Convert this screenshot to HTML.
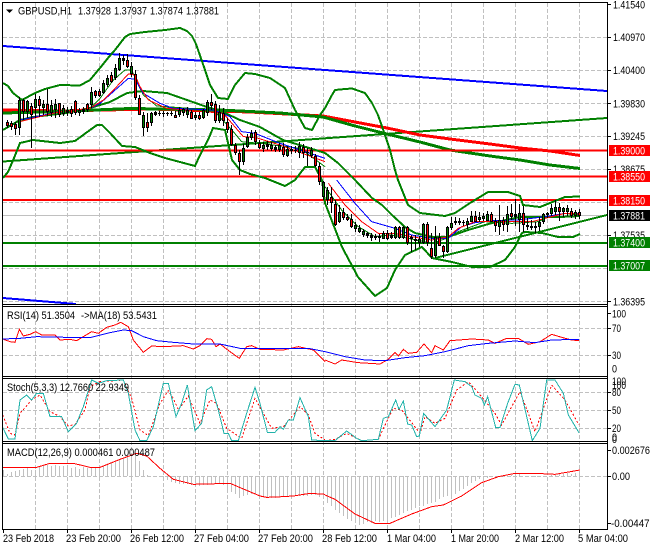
<!DOCTYPE html>
<html><head><meta charset="utf-8"><title>GBPUSD,H1</title>
<style>
html,body{margin:0;padding:0;background:#fff;width:650px;height:550px;overflow:hidden}
svg{display:block;font-family:"Liberation Sans",sans-serif;font-size:11px}
polyline,path,line{vector-effect:non-scaling-stroke;fill:none}
.c{shape-rendering:crispEdges}
text{fill:#000}
.w{fill:#fff}
</style></head><body>
<svg width="650" height="550" viewBox="0 0 650 550" xmlns="http://www.w3.org/2000/svg">
<defs>
<clipPath id="cm"><rect x="3" y="3" width="604" height="301"/></clipPath>
<clipPath id="cr"><rect x="3" y="307" width="604" height="69"/></clipPath>
<clipPath id="cs"><rect x="3" y="379" width="604" height="62"/></clipPath>
<clipPath id="cd"><rect x="3" y="444" width="604" height="85"/></clipPath>
</defs>
<g class="c" shape-rendering="crispEdges">
<!-- grid -->
<path stroke="#c0c0c0" stroke-dasharray="4 2" d="M35.5 3V529M67.5 3V529M99.5 3V529M131.5 3V529M163.5 3V529M195.5 3V529M227.5 3V529M259.5 3V529M291.5 3V529M323.5 3V529M355.5 3V529M387.5 3V529M419.5 3V529M451.5 3V529M483.5 3V529M515.5 3V529M547.5 3V529M579.5 3V529M3 37.5H607M3 70.5H607M3 103.5H607M3 136.5H607M3 169.5H607M3 202.5H607M3 235.5H607M3 268.5H607M3 301.5H607M3 328.5H607M3 355.5H607M3 392.5H607M3 410.5H607M3 428.5H607M3 476.5H607"/>
<line x1="3" x2="607" y1="215.5" y2="215.5" stroke="#c0c0c0"/>

<!-- main indicators -->
<g clip-path="url(#cm)">
<polyline fill="none" stroke="#0000ff" stroke-width="2" points="3,46 325,70 607,91"/>
<polyline fill="none" stroke="#0000ff" stroke-width="2" points="3,298 76,304"/>
<polyline fill="none" stroke="#008000" stroke-width="2" points="3,161.5 607,118"/>
<polyline fill="none" stroke="#008000" stroke-width="2" points="435,258 607,215"/>
<polyline fill="none" stroke="#ff0000" stroke-width="3" points="3,110 60,111 150,109 250,112 323,116 355,122 387,128 420,135 450,139 490,144 520,148 550,151 580,155.5"/>
<polyline fill="none" stroke="#008000" stroke-width="3" points="3,113 60,111.5 130,108.5 220,110 280,113 323,117 355,126 387,134 420,142 450,150 490,156 520,160 550,165 580,168.5"/>
<path stroke="#ff0000" stroke-width="2" d="M3 150.5H607M3 176.5H607M3 200H607"/>
<path stroke="#008000" stroke-width="2" d="M3 243H607M3 266H607"/>
<!-- Bollinger -->
<polyline fill="none" stroke="#008000" stroke-width="2" points="3,83 8,86 13,93 22,100 35,93 45,89 60,85 80,85.5 90,80 100,68 108,58 115,50 125,37 130,34 145,32 165,30 180,28 187,31 192,36 196,44 205,70 210,85 218,98 228,99 235,85 245,73 255,74 270,78 285,88 295,110 305,128 312,130 320,115 325,108 332,95 335,90 345,89 352,88.5 365,93 372,103 378,115 385,135 390,150 395,170 398,180 408,205 420,213 445,216 455,213 470,203 488,192 508,192 520,196 523,205 540,207 550,203 565,197 580,196.5"/>
<polyline fill="none" stroke="#008000" stroke-width="2" points="3,178 8,172 14,158 20,143 33,140 60,143 75,141 90,130 97,125 102,125 110,133 122,146 135,147 150,153 165,158 180,162 195,166 200,155 208,140 213,128 225,130 232,160 240,170 250,174 265,178 285,186 295,180 305,167 315,167 322,180 325,203 342,247 358,277 375,296 387,288 395,270 405,255 422,247 432,258 452,262 472,267 490,267 505,260 515,247 522,233 525,232 542,233 558,237 573,237 580,234"/>
<polyline fill="none" stroke="#008000" stroke-width="2" points="3,130 20,120 33,117 67,113 90,108 110,102 127,93 143,91 167,93 187,100 207,107 223,112 240,120 260,127 283,140 293,143 325,153 338,163 355,180 372,198 382,205 392,215 405,227 415,233 432,237 448,237 468,230 492,223 520,217 560,217 580,216"/>
<!-- MAs -->
<g transform="scale(.33333)">
<polyline stroke="#008000" points="270,325 300,295 340,240 375,210 395,210 410,245 430,285 470,318 640,330 700,395 725,425 780,430 900,445 975,500"/>
<polyline stroke="#0000ff" points="60,360 180,335 270,325 300,310 340,275 385,235 405,238 430,280 480,310 520,325 640,330 690,350 725,395 765,400 840,430 975,475"/>
<polyline stroke="#ff0000" points="60,365 180,335 270,325 310,300 350,260 385,222 405,225 420,260 445,300 500,325 670,340 700,375 730,410 765,412 840,435 975,485"/>
</g>
<g transform="translate(325,180) scale(.33333)">
<polyline stroke="#008000" points="0,20 50,90 100,140 150,170 200,165 250,175 320,190 365,175 400,155 480,125 560,130 640,125 670,110 720,100 765,105"/>
<polyline stroke="#0000ff" points="35,0 90,70 140,125 210,145 260,165 320,175 370,175 410,140 450,128 500,122 580,120 660,110 720,100 765,100"/>
<polyline stroke="#ff0000" points="10,10 60,75 110,125 160,160 210,160 260,170 320,180 370,170 400,145 450,125 500,125 560,125 620,125 660,115 720,100 765,102"/>
</g>
<!-- candle wicks -->
<path stroke="#000" d="M7.5 120V128M11.5 121V130M15.5 122V135M19.5 97V135M23.5 99V120M27.5 100V118M31.5 103V148M35.5 94V118M39.5 96V117M43.5 100V115M47.5 89V116M51.5 100V117M55.5 99V118M59.5 103V117M63.5 105V116M67.5 107V116M71.5 106V117M75.5 100V115M79.5 108V116M83.5 107V114M87.5 103V112M91.5 87V108M95.5 90V98M99.5 89V97M103.5 80V94M107.5 75V87M111.5 72V83M115.5 64V80M119.5 53V71M123.5 55V65M127.5 54V68M131.5 62V77M135.5 70V100M139.5 95V115M143.5 112V136M147.5 113V132M151.5 112V126M155.5 111V116M159.5 111V116M163.5 111V117M167.5 112V116M171.5 111V116M175.5 111V118M179.5 107V117M183.5 108V116M187.5 107V118M191.5 110V119M195.5 112V120M199.5 112V120M203.5 109V119M207.5 100V116M211.5 94V110M215.5 101V123M219.5 105V123M223.5 108V126M227.5 118V133M231.5 125V146M235.5 143V155M239.5 150V175M243.5 144V165M247.5 134V148M251.5 130V140M255.5 130V145M259.5 140V149M263.5 142V152M267.5 141V150M271.5 142V151M275.5 145V152M279.5 143V152M283.5 143V157M287.5 146V157M291.5 146V154M295.5 146V153M299.5 142V158M303.5 144V158M307.5 148V166M311.5 147V158M315.5 154V167M319.5 163V185M323.5 181V200M327.5 187V205M331.5 187V213M335.5 200V226M339.5 205V223M343.5 208V220M347.5 214V221M351.5 214V228M355.5 222V232M359.5 225V233M363.5 229V237M367.5 232V238M371.5 233V241M375.5 234V240M379.5 234V242M383.5 231V239M387.5 230V240M391.5 232V239M395.5 226V239M399.5 226V239M403.5 226V239M407.5 226V245M411.5 235V252M415.5 235V250M419.5 236V247M423.5 223V244M427.5 222V246M431.5 233V259M435.5 226V258M439.5 233V246M443.5 245V258M447.5 226V253M451.5 217V230M455.5 217V225M459.5 218V225M463.5 220V226M467.5 218V229M471.5 211V222M475.5 211V222M479.5 212V222M483.5 213V221M487.5 211V221M491.5 212V222M495.5 218V232M499.5 205V235M503.5 217V231M507.5 206V232M511.5 204V220M515.5 199V226M519.5 204V232M523.5 206V232M527.5 218V230M531.5 220V230M535.5 222V233M539.5 217V231M543.5 213V224M547.5 212V218M551.5 204V216M555.5 200V215M559.5 203V221M563.5 207V217M567.5 205V216M571.5 208V218M575.5 210V219M579.5 209V219"/>
<!-- candle bodies -->
<path stroke="#000" stroke-width="3" d="M7.5 122V126M11.5 123V127M15.5 124V129M19.5 100V128M23.5 100V112M27.5 101V112M31.5 106V115M35.5 99V108M39.5 99V106M43.5 104V108M47.5 104V112M51.5 105V113M55.5 104V110M59.5 103V115M63.5 108V114M67.5 110V113M71.5 109V114M75.5 101V113M79.5 110V113M83.5 109V112M87.5 104V110M91.5 92V105M95.5 91V96M99.5 91V96M103.5 83V93M107.5 78V85M111.5 75V82M115.5 68V78M119.5 58V70M123.5 58V61M127.5 60V67M131.5 66V74M135.5 74V98M139.5 98V115M143.5 115V128M147.5 122V128M151.5 113V123M155.5 112V115M159.5 113V114M163.5 113V114M167.5 113V114M171.5 113V114M175.5 115V118M179.5 110V115M183.5 109V113M187.5 110V115M191.5 112V119M195.5 115V118M199.5 115V119M203.5 110V118M207.5 102V113M211.5 102V106M215.5 104V121M219.5 112V121M223.5 113V121M227.5 122V130M231.5 129V145M235.5 145V153M239.5 153V162M243.5 148V162M247.5 137V147M251.5 133V138M255.5 132V142M259.5 143V148M263.5 145V149M267.5 144V147M271.5 145V149M275.5 147V150M279.5 145V150M283.5 147V155M287.5 149V156M291.5 149V151M295.5 150V151M299.5 146V153M303.5 147V153M307.5 152V153M311.5 150V156M315.5 156V166M319.5 166V182M323.5 182V197M327.5 190V200M331.5 197V203M335.5 204V225M339.5 212V222M343.5 212V218M347.5 217V220M351.5 219V227M355.5 225V229M359.5 228V232M363.5 231V235M367.5 233V236M371.5 235V238M375.5 236V238M379.5 236V238M383.5 233V239M387.5 233V239M391.5 235V238M395.5 227V238M399.5 227V238M403.5 227V238M407.5 227V243M411.5 237V239M415.5 239V241M419.5 239V243M423.5 224V243M427.5 224V243M431.5 248V257M435.5 237V256M439.5 237V246M443.5 246V252M447.5 227V252M451.5 223V228M455.5 221V223M459.5 221V223M463.5 222V223M467.5 221V225M471.5 216V222M475.5 216V222M479.5 217V220M483.5 216V219M487.5 214V221M491.5 214V222M495.5 221V226M499.5 220V227M503.5 220V225M507.5 214V225M511.5 213V217M515.5 214V217M519.5 213V220M523.5 213V225M527.5 225V227M531.5 226V228M535.5 226V228M539.5 222V227M543.5 214V222M547.5 213V215M551.5 208V214M555.5 207V212M559.5 207V212M563.5 208V212M567.5 208V212M571.5 211V216M575.5 212V216M579.5 212V216"/>
<path stroke="#ff0000" d="M7.5 123V125M11.5 124V126M15.5 125V128M23.5 101V111M31.5 107V114M39.5 100V105M47.5 105V111M59.5 104V114M71.5 110V113M75.5 102V112M87.5 105V109M95.5 92V95M99.5 92V95M111.5 76V81M127.5 61V66M135.5 75V97M139.5 99V114M147.5 123V127M175.5 116V117M191.5 113V118M199.5 116V118M211.5 103V105M215.5 105V120M223.5 114V120M227.5 123V129M231.5 130V144M235.5 146V152M239.5 154V161M255.5 133V141M259.5 144V147M283.5 148V154M303.5 148V152M315.5 157V165M319.5 167V181M331.5 198V202M335.5 205V224M343.5 213V217M347.5 218V219M351.5 220V226M387.5 234V238M399.5 228V237M407.5 228V242M427.5 225V242M431.5 249V256M439.5 238V245M443.5 247V251M475.5 217V221M491.5 215V221M495.5 222V225M503.5 221V224M511.5 214V216M523.5 214V224M559.5 208V211M571.5 212V215M579.5 213V215"/>
<path stroke="#008000" d="M19.5 101V127M27.5 102V111M35.5 100V107M43.5 105V107M51.5 106V112M55.5 105V109M63.5 109V113M79.5 111V112M91.5 93V104M103.5 84V92M107.5 79V84M115.5 69V77M119.5 59V69M131.5 67V73M143.5 116V127M151.5 114V122M179.5 111V114M183.5 110V112M187.5 111V114M195.5 116V117M203.5 111V117M207.5 103V112M219.5 113V120M243.5 149V161M247.5 138V146M251.5 134V137M263.5 146V148M271.5 146V148M279.5 146V149M287.5 150V155M299.5 147V152M311.5 151V155M323.5 183V196M327.5 191V199M339.5 213V221M355.5 226V228M359.5 229V231M363.5 232V234M383.5 234V238M395.5 228V237M403.5 228V237M419.5 240V242M423.5 225V242M435.5 238V255M447.5 228V251M451.5 224V227M467.5 222V224M471.5 217V221M479.5 218V219M483.5 217V218M487.5 215V220M499.5 221V226M507.5 215V224M519.5 214V219M539.5 223V226M543.5 215V221M551.5 209V213M555.5 208V211M563.5 209V211M567.5 209V211M575.5 213V215"/>
</g>

<!-- RSI -->
<g clip-path="url(#cr)">
<g transform="translate(0,180) scale(.33333)">
<polyline stroke="#ff0000" points="8,477 30,485 45,487 58,448 70,468 90,463 107,455 125,465 165,465 180,480 210,478 230,482 250,470 275,455 295,460 320,442 345,435 362,427 385,440 400,480 430,517 455,498 490,500 550,497 580,507 600,497 620,476 635,478 648,500 660,492 690,515 718,535 740,500 755,497 780,508 850,510 895,500 940,510 975,545"/>
<polyline stroke="#0000ff" points="8,477 60,475 110,470 200,472 270,473 330,458 370,450 395,452 430,470 470,482 520,487 580,492 660,492 720,505 850,506 930,506 975,515"/>
</g>
<g transform="translate(325,180) scale(.33333)">
<polyline stroke="#ff0000" points="0,540 30,552 50,540 100,548 165,552 190,538 210,518 220,528 235,508 250,520 275,517 297,492 320,518 330,497 355,510 375,482 440,477 490,480 510,490 545,475 580,475 610,493 645,485 680,463 710,472 740,480 762,482"/>
<polyline stroke="#0000ff" points="0,515 60,530 120,540 180,542 240,533 300,527 360,515 430,497 490,490 570,483 630,488 680,480 762,478"/>
</g>
</g>

<!-- Stoch -->
<g clip-path="url(#cs)">
<g transform="translate(0,370) scale(.33333)">
<polyline stroke="#ff0000" stroke-dasharray="2 2" points="8,135 30,190 45,195 60,130 95,90 120,75 150,125 180,140 205,168 225,163 255,120 270,50 300,35 370,30 395,85 420,180 445,197 480,100 505,62 520,85 535,120 565,78 600,160 630,90 650,100 680,175 725,205 765,85 790,130 815,175 850,170 900,110 925,135 945,190 975,210"/>
<polyline stroke="#20b2aa" points="8,172 25,207 45,207 60,90 80,75 95,90 110,70 130,70 150,140 185,140 205,185 230,160 250,110 275,30 295,40 320,32 370,30 385,70 405,180 420,212 440,212 460,170 490,40 505,40 528,140 545,100 562,45 585,182 605,160 620,60 635,50 655,120 672,190 685,190 695,212 715,212 740,130 765,52 780,100 802,187 825,187 840,170 850,178 865,150 880,150 900,83 925,140 935,210 975,212"/>
</g>
<g transform="translate(325,370) scale(.33333)">
<polyline stroke="#ff0000" stroke-dasharray="2 2" points="0,212 30,208 65,190 110,212 160,208 185,155 205,115 230,120 250,145 285,190 300,140 330,160 360,145 395,60 430,35 470,80 510,130 530,165 560,110 585,65 610,130 630,185 650,130 680,45 720,90 762,165"/>
<polyline stroke="#20b2aa" points="0,212 30,212 65,183 95,205 110,212 160,208 175,145 190,140 212,90 222,118 235,93 248,162 260,165 275,200 283,198 296,130 330,170 365,120 388,30 420,35 440,50 450,75 470,85 478,105 488,80 512,172 525,172 548,100 570,43 583,45 622,212 645,175 665,30 690,30 715,70 730,135 762,188"/>
</g>
</g>

<!-- MACD -->
<g clip-path="url(#cd)">
<path stroke="#c0c0c0" d="M3.5 476V470M7.5 476V474M11.5 476V472M15.5 476V471M19.5 476V470M23.5 476V469M27.5 476V468M31.5 476V470M35.5 476V470M39.5 476V466M43.5 476V465M47.5 476V465M51.5 476V466M55.5 476V465M59.5 476V466M63.5 476V466M67.5 476V467M71.5 476V468M75.5 476V467M79.5 476V469M83.5 476V467M87.5 476V468M91.5 476V467M95.5 476V468M99.5 476V467M103.5 476V466M107.5 476V465M111.5 476V463M115.5 476V462M119.5 476V460M123.5 476V458M127.5 476V456M131.5 476V455M135.5 476V456M139.5 476V461M143.5 476V470M147.5 476V475M159.5 476V477M163.5 476V478M167.5 476V480M171.5 476V482M175.5 476V483M179.5 476V484M183.5 476V484M187.5 476V484M191.5 476V485M195.5 476V485M199.5 476V486M203.5 476V485M207.5 476V485M211.5 476V484M215.5 476V484M219.5 476V484M223.5 476V485M227.5 476V489M231.5 476V492M235.5 476V494M239.5 476V498M243.5 476V496M247.5 476V495M251.5 476V494M255.5 476V494M259.5 476V496M263.5 476V497M267.5 476V497M271.5 476V498M275.5 476V498M279.5 476V497M283.5 476V497M287.5 476V497M291.5 476V496M295.5 476V496M299.5 476V496M303.5 476V496M307.5 476V496M311.5 476V495M315.5 476V495M319.5 476V497M323.5 476V495M327.5 476V503M331.5 476V506M335.5 476V510M339.5 476V513M343.5 476V516M347.5 476V519M351.5 476V521M355.5 476V523M359.5 476V525M363.5 476V524M367.5 476V522M371.5 476V523M375.5 476V521M379.5 476V522M383.5 476V521M387.5 476V519M391.5 476V518M395.5 476V517M399.5 476V515M403.5 476V513M407.5 476V511M411.5 476V510M415.5 476V508M419.5 476V506M423.5 476V506M427.5 476V504M431.5 476V503M435.5 476V502M439.5 476V499M443.5 476V497M447.5 476V496M451.5 476V496M455.5 476V494M459.5 476V491M463.5 476V489M467.5 476V486M471.5 476V483M475.5 476V481M479.5 476V479M483.5 476V478M487.5 476V478M491.5 476V477M511.5 476V475M515.5 476V473M519.5 476V474M523.5 476V476M527.5 476V477M531.5 476V477M535.5 476V477M539.5 476V477M543.5 476V477M551.5 476V475M555.5 476V475M559.5 476V474M563.5 476V474M567.5 476V473M571.5 476V474M575.5 476V473M579.5 476V473"/>
<g transform="translate(0,370) scale(.33333)">
<polyline stroke="#ff0000" points="8,292 110,292 150,280 220,280 270,292 300,292 360,268 410,250 440,258 480,295 520,328 580,343 690,340 780,378 800,382 830,381 880,378 930,370 975,373"/>
</g>
<g transform="translate(325,370) scale(.33333)">
<polyline stroke="#ff0000" points="0,375 30,388 90,432 150,460 195,460 260,432 320,410 355,405 410,378 470,338 520,320 570,310 650,311 690,313 765,300"/>
</g>
</g>

<!-- frames -->
<path stroke="#000" d="M2.5 2V530M2 2.5H608M607.5 2V530M2 304.5H608M2 306.5H608M2 376.5H608M2 378.5H608M2 441.5H608M2 443.5H608M2 529.5H608"/>
<!-- axis ticks -->
<path stroke="#000" d="M607 4.5H611M607 37.5H611M607 70.5H611M607 103.5H611M607 136.5H611M607 169.5H611M607 235.5H611M607 301.5H611M607 313.5H611M607 328.5H611M607 355.5H611M607 392.5H611M607 410.5H611M607 428.5H611M607 450.5H611M607 476.5H611M607 523.5H611M3.5 529V533M67.5 529V533M131.5 529V533M195.5 529V533M259.5 529V533M323.5 529V533M387.5 529V533M451.5 529V533M515.5 529V533M579.5 529V533"/>
</g>

<!-- title triangle -->
<polygon points="6,9.5 13,9.5 9.5,13" fill="#000"/>

<!-- pane texts -->
<text x="18" y="14.5" textLength="54" lengthAdjust="spacingAndGlyphs">GBPUSD,H1</text>
<text x="78" y="14.5" textLength="33" lengthAdjust="spacingAndGlyphs">1.37928</text>
<text x="114" y="14.5" textLength="33" lengthAdjust="spacingAndGlyphs">1.37937</text>
<text x="150" y="14.5" textLength="33" lengthAdjust="spacingAndGlyphs">1.37874</text>
<text x="186" y="14.5" textLength="33" lengthAdjust="spacingAndGlyphs">1.37881</text>
<text x="7" y="319" textLength="68" lengthAdjust="spacingAndGlyphs">RSI(14) 51.3504</text>
<text x="81" y="319" textLength="76" lengthAdjust="spacingAndGlyphs">-&gt;MA(18) 53.5431</text>
<text x="7" y="391" textLength="122" lengthAdjust="spacingAndGlyphs">Stoch(5,3,3) 12.7660 22.9349</text>
<text x="7" y="456" textLength="148" lengthAdjust="spacingAndGlyphs">MACD(12,26,9) 0.000461 0.000487</text>

<!-- right axis -->
<g>
<text x="613" y="8.5" textLength="32" lengthAdjust="spacingAndGlyphs">1.41540</text>
<text x="613" y="41" textLength="32" lengthAdjust="spacingAndGlyphs">1.40970</text>
<text x="613" y="74" textLength="32" lengthAdjust="spacingAndGlyphs">1.40400</text>
<text x="613" y="107.5" textLength="32" lengthAdjust="spacingAndGlyphs">1.39830</text>
<text x="613" y="140" textLength="32" lengthAdjust="spacingAndGlyphs">1.39245</text>
<text x="613" y="173" textLength="32" lengthAdjust="spacingAndGlyphs">1.38675</text>
<text x="613" y="239" textLength="32" lengthAdjust="spacingAndGlyphs">1.37535</text>
<text x="613" y="305.5" textLength="32" lengthAdjust="spacingAndGlyphs">1.36395</text>

<rect x="609" y="145" width="41" height="11" fill="#ff0000"/>
<text class="w" x="613" y="154.5" textLength="32" lengthAdjust="spacingAndGlyphs">1.39000</text>
<rect x="609" y="171" width="41" height="11" fill="#ff0000"/>
<text class="w" x="613" y="180.5" textLength="32" lengthAdjust="spacingAndGlyphs">1.38550</text>
<rect x="609" y="195" width="41" height="11" fill="#ff0000"/>
<text class="w" x="613" y="204.5" textLength="32" lengthAdjust="spacingAndGlyphs">1.38150</text>
<rect x="609" y="210" width="41" height="11" fill="#000"/>
<text class="w" x="613" y="219.5" textLength="32" lengthAdjust="spacingAndGlyphs">1.37881</text>
<rect x="609" y="237" width="41" height="11" fill="#008000"/>
<text class="w" x="613" y="246.5" textLength="32" lengthAdjust="spacingAndGlyphs">1.37400</text>
<rect x="609" y="260" width="41" height="11" fill="#008000"/>
<text class="w" x="613" y="269.5" textLength="32" lengthAdjust="spacingAndGlyphs">1.37007</text>

<text x="612" y="317.5" textLength="14" lengthAdjust="spacingAndGlyphs">100</text>
<text x="612" y="332" textLength="9" lengthAdjust="spacingAndGlyphs">70</text>
<text x="612" y="359" textLength="9" lengthAdjust="spacingAndGlyphs">30</text>
<text x="612" y="372.5" textLength="5" lengthAdjust="spacingAndGlyphs">0</text>
<text x="612" y="385" textLength="14" lengthAdjust="spacingAndGlyphs">100</text>
<text x="612" y="389" textLength="14" lengthAdjust="spacingAndGlyphs">100</text>
<text x="612" y="396" textLength="9" lengthAdjust="spacingAndGlyphs">80</text>
<text x="612" y="414" textLength="9" lengthAdjust="spacingAndGlyphs">50</text>
<text x="612" y="432" textLength="9" lengthAdjust="spacingAndGlyphs">20</text>
<text x="612" y="441" textLength="5" lengthAdjust="spacingAndGlyphs">0</text>
<text x="612" y="443" textLength="5" lengthAdjust="spacingAndGlyphs">0</text>
<text x="612" y="454" textLength="38" lengthAdjust="spacingAndGlyphs">0.002676</text>
<text x="612" y="480" textLength="18" lengthAdjust="spacingAndGlyphs">0.00</text>
<text x="611" y="527" textLength="44" lengthAdjust="spacingAndGlyphs">-0.004477</text>
</g>

<!-- time axis -->
<text x="3" y="542" textLength="51" lengthAdjust="spacingAndGlyphs">23 Feb 2018</text>
<text x="66" y="542" textLength="55" lengthAdjust="spacingAndGlyphs">23 Feb 20:00</text>
<text x="130" y="542" textLength="54" lengthAdjust="spacingAndGlyphs">26 Feb 12:00</text>
<text x="194" y="542" textLength="55" lengthAdjust="spacingAndGlyphs">27 Feb 04:00</text>
<text x="258" y="542" textLength="55" lengthAdjust="spacingAndGlyphs">27 Feb 20:00</text>
<text x="322" y="542" textLength="55" lengthAdjust="spacingAndGlyphs">28 Feb 12:00</text>
<text x="387" y="542" textLength="49" lengthAdjust="spacingAndGlyphs">1 Mar 04:00</text>
<text x="451" y="542" textLength="48" lengthAdjust="spacingAndGlyphs">1 Mar 20:00</text>
<text x="515" y="542" textLength="49" lengthAdjust="spacingAndGlyphs">2 Mar 12:00</text>
<text x="578" y="542" textLength="50" lengthAdjust="spacingAndGlyphs">5 Mar 04:00</text>
</svg>
</body></html>
